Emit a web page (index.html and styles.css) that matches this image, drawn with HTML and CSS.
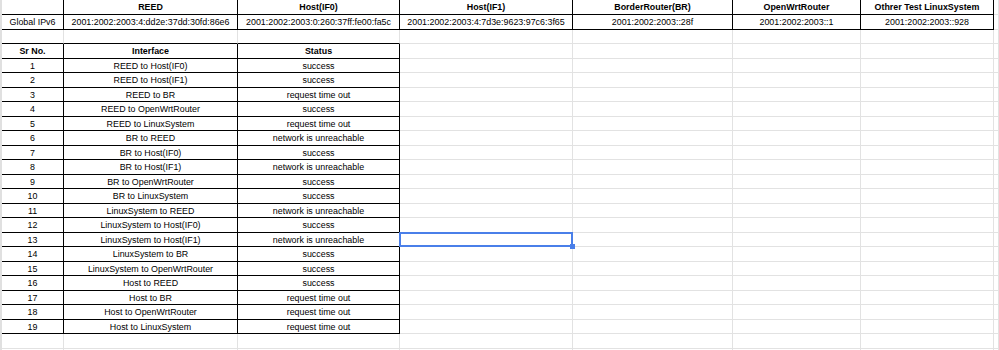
FILE: index.html
```html
<!DOCTYPE html>
<html>
  <head>
    <title>Ping results</title>
    <meta charset="utf-8">
    <link rel="stylesheet" href="styles.css">
  </head>
  <body>
    <div class="sheet">
      <div class="row head">
        <div class="k"></div><div class="k">REED</div><div class="k">Host(IF0)</div><div class="k">Host(IF1)</div><div class="k">BorderRouter(BR)</div><div class="k">OpenWrtRouter</div><div class="k">Othrer Test LinuxSystem</div><div></div>
      </div>
      <div class="row">
        <div class="k">Global IPv6</div><div class="k">2001:2002:2003:4:dd2e:37dd:30fd:86e6</div><div class="k">2001:2002:2003:0:260:37ff:fe00:fa5c</div><div class="k">2001:2002:2003:4:7d3e:9623:97c6:3f65</div><div class="k">2001:2002:2003::28f</div><div class="k">2001:2002:2003::1</div><div class="k">2001:2002:2003::928</div><div></div>
      </div>
      <div class="row">
        <div class="kb"></div><div class="kb"></div><div class="kb"></div><div></div><div></div><div></div><div></div><div></div>
      </div>
      <div class="row head">
        <div class="k">Sr No.</div><div class="k">Interface</div><div class="k">Status</div><div></div><div></div><div></div><div></div><div></div>
      </div>
      <div class="row"><div class="k">1</div><div class="k">REED to Host(IF0)</div><div class="k">success</div><div></div><div></div><div></div><div></div><div></div></div>
      <div class="row"><div class="k">2</div><div class="k">REED to Host(IF1)</div><div class="k">success</div><div></div><div></div><div></div><div></div><div></div></div>
      <div class="row"><div class="k">3</div><div class="k">REED to BR</div><div class="k">request time out</div><div></div><div></div><div></div><div></div><div></div></div>
      <div class="row"><div class="k">4</div><div class="k">REED to OpenWrtRouter</div><div class="k">success</div><div></div><div></div><div></div><div></div><div></div></div>
      <div class="row"><div class="k">5</div><div class="k">REED to LinuxSystem</div><div class="k">request time out</div><div></div><div></div><div></div><div></div><div></div></div>
      <div class="row"><div class="k">6</div><div class="k">BR to REED</div><div class="k">network is unreachable</div><div></div><div></div><div></div><div></div><div></div></div>
      <div class="row"><div class="k">7</div><div class="k">BR to Host(IF0)</div><div class="k">success</div><div></div><div></div><div></div><div></div><div></div></div>
      <div class="row"><div class="k">8</div><div class="k">BR to Host(IF1)</div><div class="k">network is unreachable</div><div></div><div></div><div></div><div></div><div></div></div>
      <div class="row"><div class="k">9</div><div class="k">BR to OpenWrtRouter</div><div class="k">success</div><div></div><div></div><div></div><div></div><div></div></div>
      <div class="row"><div class="k">10</div><div class="k">BR to LinuxSystem</div><div class="k">success</div><div></div><div></div><div></div><div></div><div></div></div>
      <div class="row"><div class="k">11</div><div class="k">LinuxSystem to REED</div><div class="k">network is unreachable</div><div></div><div></div><div></div><div></div><div></div></div>
      <div class="row"><div class="k">12</div><div class="k">LinuxSystem to Host(IF0)</div><div class="k">success</div><div></div><div></div><div></div><div></div><div></div></div>
      <div class="row"><div class="k">13</div><div class="k">LinuxSystem to Host(IF1)</div><div class="k">network is unreachable</div><div class="sel"></div><div></div><div></div><div></div><div></div></div>
      <div class="row"><div class="k">14</div><div class="k">LinuxSystem to BR</div><div class="k">success</div><div></div><div></div><div></div><div></div><div></div></div>
      <div class="row"><div class="k">15</div><div class="k">LinuxSystem to OpenWrtRouter</div><div class="k">success</div><div></div><div></div><div></div><div></div><div></div></div>
      <div class="row"><div class="k">16</div><div class="k">Host to REED</div><div class="k">success</div><div></div><div></div><div></div><div></div><div></div></div>
      <div class="row"><div class="k">17</div><div class="k">Host to BR</div><div class="k">request time out</div><div></div><div></div><div></div><div></div><div></div></div>
      <div class="row"><div class="k">18</div><div class="k">Host to OpenWrtRouter</div><div class="k">request time out</div><div></div><div></div><div></div><div></div><div></div></div>
      <div class="row"><div class="k">19</div><div class="k">Host to LinuxSystem</div><div class="k">request time out</div><div></div><div></div><div></div><div></div><div></div></div>
      <div class="row"><div></div><div></div><div></div><div></div><div></div><div></div><div></div><div></div></div>
      <div class="row"><div></div><div></div><div></div><div></div><div></div><div></div><div></div><div></div></div>
    </div>
  </body>
</html>
```
FILE: styles.css
```css
body{
  margin: 0;
  background-color: #fff;
  overflow: hidden;
}
.sheet{
  display: grid;
  grid-template-columns: 62px 174px 162px 173px 160px 128px 133px 1fr;
  grid-template-rows: 15px;
  grid-auto-rows: 15px 14px;
  border-left: 2px solid #e0e0e0;
  font-family: "Liberation Sans", Arial, sans-serif;
  font-size: 8.9px;
  color: #000;
}
.row{
  display: contents;
}
.row > div{
  box-sizing: border-box;
  display: flex;
  align-items: center;
  justify-content: center;
  white-space: nowrap;
  overflow: hidden;
  border-right: 1px solid #e2e2e2;
  border-bottom: 1px solid #e2e2e2;
}
.head > div{
  font-weight: bold;
}
.row > .k{
  border-right-color: #000;
  border-bottom-color: #000;
}
.row > .kb{
  border-bottom-color: #000;
}
/* selected cell */
.row > .sel{
  position: relative;
  overflow: visible;
}
.sel::before{
  content: "";
  position: absolute;
  top: -1px;
  left: -1px;
  right: -1px;
  bottom: -1px;
  border: 2px solid #4a7fe9;
}
.sel::after{
  content: "";
  position: absolute;
  right: -3px;
  bottom: -3px;
  width: 5px;
  height: 5px;
  background-color: #4a7fe9;
}
```
